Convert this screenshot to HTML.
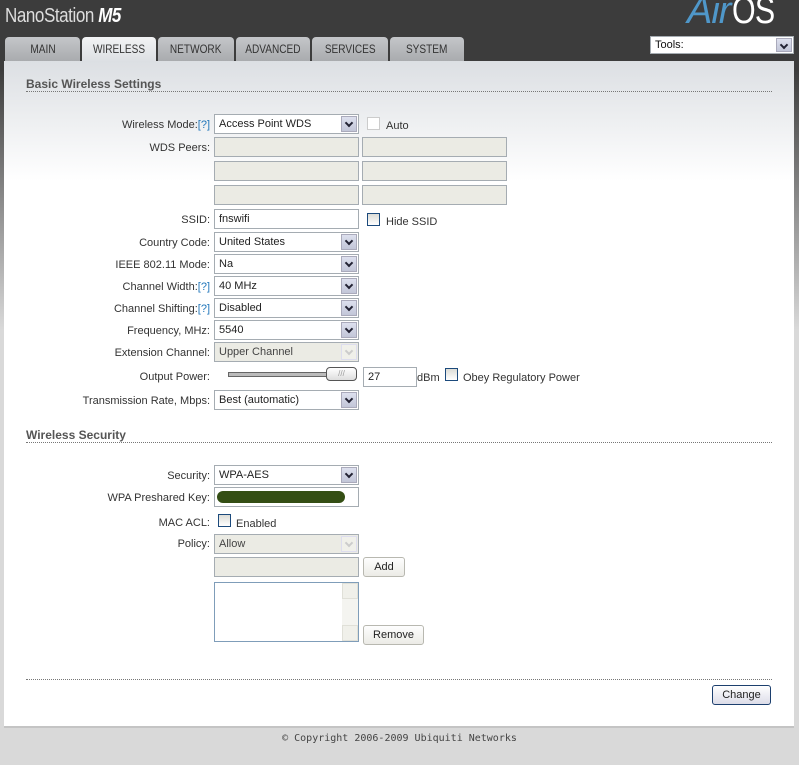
<!DOCTYPE html>
<html><head><style>
*{margin:0;padding:0;box-sizing:border-box}
body{width:799px;height:765px;position:relative;overflow:hidden;font-family:"Liberation Sans",Tahoma,sans-serif;font-size:11px;color:#333;
background:linear-gradient(#3c3c3c 0,#3c3c3c 70px,#d9d9d9 330px,#d9d9d9 100%)}
.a{position:absolute}
#panel{left:4px;top:61px;width:790px;height:667px;background:linear-gradient(#dcdfe3 0,#fff 120px,#fff 100%);border-bottom:2px solid #c4c4c4}
.tab{position:absolute;top:37px;height:24px;border-radius:4px 4px 0 0;background:linear-gradient(#c4c6c9,#a9abae);color:#333;font-size:12px;text-align:center;line-height:24px}
.tab span{display:inline-block;transform:scaleX(0.84)}
.tab.on{background:linear-gradient(#f2f3f4,#dcdfe3);height:25px}
.h{font-weight:bold;font-size:12px;color:#555}
.line{height:0;border-top:1px dotted #777}
.lbl{position:absolute;right:589px;text-align:right;white-space:nowrap;color:#333;margin-top:1px}
.q{color:#2277bb}
.sel,.inp{position:absolute;height:20px;border:1px solid #a5acb2;background:#fff;padding-left:4px;line-height:19px;white-space:nowrap;color:#222}
.arr{position:absolute;right:1px;top:1px;width:16px;height:16px;background:linear-gradient(#dde0ee,#c2c6d8);border:1px solid #aab;z-index:2}
.arr::after{content:"";position:absolute;left:4px;top:3px;width:4px;height:4px;border-right:2px solid #223;border-bottom:2px solid #223;transform:rotate(45deg)}
.dis{background:#ebebe4;color:#444}
.dis .arr{background:#f0f0ea;border-color:#dde}
.dis .arr::after{border-color:#ccc}
.cb{position:absolute;width:13px;height:13px;border:1px solid #1c4a7c;background:linear-gradient(#dcdcd6,#fff)}
.btn{position:absolute;height:20px;border:1px solid #b8b8b0;border-radius:3px;background:linear-gradient(#fefefe,#ecebe6);text-align:center;line-height:19px;color:#222}
</style></head><body>
<div class="a" style="left:5px;top:5px;font-size:20px;color:#ddd;letter-spacing:-0.5px;transform:scaleX(0.85);transform-origin:left">NanoStation <b style="font-style:italic;color:#fff">M5</b></div>
<div class="a" style="left:687px;top:-10px;font-size:38px;white-space:nowrap;letter-spacing:-1px"><i style="color:#4f97c9">Air</i><span style="color:#fff;display:inline-block;transform:scaleX(0.8);transform-origin:left;margin-left:2px">OS</span></div>
<div class="sel" style="left:650px;top:36px;width:144px;height:18px;line-height:16px;color:#111">Tools:<div class="arr" style="height:14px"></div></div>

<div class="tab" style="left:5px;width:75px"><span>MAIN</span></div>
<div class="tab on" style="left:82px;width:74px"><span>WIRELESS</span></div>
<div class="tab" style="left:158px;width:76px"><span>NETWORK</span></div>
<div class="tab" style="left:236px;width:74px"><span>ADVANCED</span></div>
<div class="tab" style="left:312px;width:76px"><span>SERVICES</span></div>
<div class="tab" style="left:390px;width:74px"><span>SYSTEM</span></div>

<div id="panel" class="a"></div>
<div class="a h" style="left:26px;top:77px">Basic Wireless Settings</div>
<div class="a line" style="left:26px;top:91px;width:746px"></div>

<div class="lbl" style="top:118px">Wireless Mode:<span class="q">[?]</span></div>
<div class="sel" style="left:214px;top:114px;width:145px">Access Point WDS<div class="arr"></div></div>
<div class="a" style="left:367px;top:117px;width:13px;height:13px;border:1px solid #ccc;background:#fff"></div>
<div class="a" style="left:386px;top:120px">Auto</div>

<div class="lbl" style="top:141px">WDS Peers:</div>
<div class="inp dis" style="left:214px;top:137px;width:145px"></div><div class="inp dis" style="left:362px;top:137px;width:145px"></div>
<div class="inp dis" style="left:214px;top:161px;width:145px"></div><div class="inp dis" style="left:362px;top:161px;width:145px"></div>
<div class="inp dis" style="left:214px;top:185px;width:145px"></div><div class="inp dis" style="left:362px;top:185px;width:145px"></div>

<div class="lbl" style="top:213px">SSID:</div>
<div class="inp" style="left:214px;top:209px;width:145px">fnswifi</div>
<div class="cb" style="left:367px;top:213px"></div><div class="a" style="left:386px;top:216px">Hide SSID</div>

<div class="lbl" style="top:236px">Country Code:</div>
<div class="sel" style="left:214px;top:232px;width:145px">United States<div class="arr"></div></div>
<div class="lbl" style="top:258px">IEEE 802.11 Mode:</div>
<div class="sel" style="left:214px;top:254px;width:145px">Na<div class="arr"></div></div>
<div class="lbl" style="top:280px">Channel Width:<span class="q">[?]</span></div>
<div class="sel" style="left:214px;top:276px;width:145px">40 MHz<div class="arr"></div></div>
<div class="lbl" style="top:302px">Channel Shifting:<span class="q">[?]</span></div>
<div class="sel" style="left:214px;top:298px;width:145px">Disabled<div class="arr"></div></div>
<div class="lbl" style="top:324px">Frequency, MHz:</div>
<div class="sel" style="left:214px;top:320px;width:145px">5540<div class="arr"></div></div>
<div class="lbl" style="top:346px">Extension Channel:</div>
<div class="sel dis" style="left:214px;top:342px;width:145px">Upper Channel<div class="arr"></div></div>

<div class="lbl" style="top:370px">Output Power:</div>
<div class="a" style="left:228px;top:372px;width:100px;height:5px;background:#bbb;border:1px solid #666"></div>
<div class="a" style="left:326px;top:367px;width:31px;height:14px;border:1px solid #555;border-radius:4px;background:linear-gradient(#fff,#ddd);font-size:8px;color:#999;text-align:center;line-height:12px">///</div>
<div class="inp" style="left:363px;top:367px;width:54px;height:20px">27</div>
<div class="a" style="left:417px;top:372px">dBm</div>
<div class="cb" style="left:445px;top:368px"></div><div class="a" style="left:463px;top:372px">Obey Regulatory Power</div>

<div class="lbl" style="top:394px">Transmission Rate, Mbps:</div>
<div class="sel" style="left:214px;top:390px;width:145px">Best (automatic)<div class="arr"></div></div>

<div class="a h" style="left:26px;top:428px">Wireless Security</div>
<div class="a line" style="left:26px;top:442px;width:746px"></div>

<div class="lbl" style="top:469px">Security:</div>
<div class="sel" style="left:214px;top:465px;width:145px">WPA-AES<div class="arr"></div></div>
<div class="lbl" style="top:491px">WPA Preshared Key:</div>
<div class="inp" style="left:214px;top:487px;width:145px"><div class="a" style="left:2px;top:3px;width:128px;height:12px;border-radius:6px;background:#344e14"></div></div>
<div class="lbl" style="top:516px">MAC ACL:</div>
<div class="cb" style="left:218px;top:514px"></div><div class="a" style="left:236px;top:518px">Enabled</div>
<div class="lbl" style="top:537px">Policy:</div>
<div class="sel dis" style="left:214px;top:534px;width:145px">Allow<div class="arr"></div></div>
<div class="inp dis" style="left:214px;top:557px;width:145px"></div>
<div class="btn" style="left:363px;top:557px;width:42px">Add</div>
<div class="a" style="left:214px;top:582px;width:145px;height:60px;border:1px solid #7f9db9;background:#fff">
<div class="a" style="right:0;top:0;width:16px;height:58px;background:#f4f4f0"></div>
<div class="a" style="right:0;top:0;width:16px;height:16px;border:1px solid #e0e0d8;background:#f0f0ea"></div>
<div class="a" style="right:0;bottom:0;width:16px;height:16px;border:1px solid #e0e0d8;background:#f0f0ea"></div></div>
<div class="btn" style="left:363px;top:625px;width:61px">Remove</div>

<div class="a line" style="left:26px;top:679px;width:746px"></div>
<div class="btn" style="left:712px;top:685px;width:59px;border:1px solid #1c3f6e;background:linear-gradient(#fff,#dcdce8)">Change</div>

<div class="a" style="left:0;top:733px;width:799px;text-align:center;font-family:'DejaVu Sans Mono','Liberation Mono',monospace;font-size:10px;color:#444">© Copyright 2006-2009 Ubiquiti Networks</div>
</body></html>
